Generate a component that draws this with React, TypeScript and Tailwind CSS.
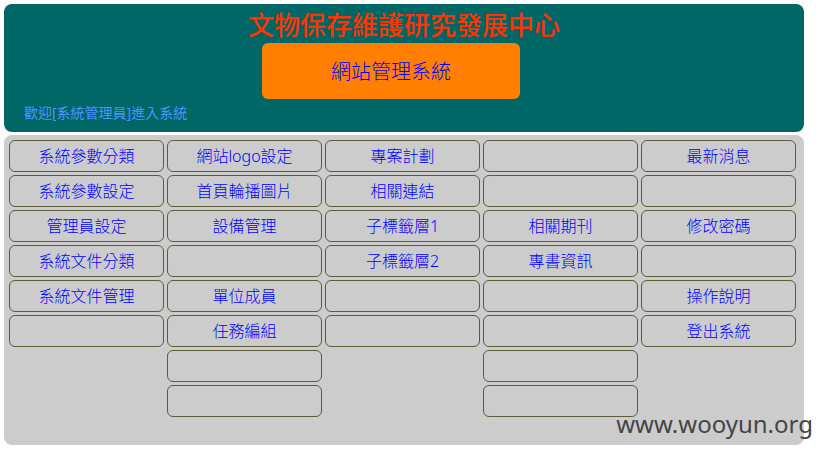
const columns: string[][] = [
  ['系統參數分類', '系統參數設定', '管理員設定', '系統文件分類', '系統文件管理', ''],
  ['網站logo設定', '首頁輪播圖片', '設備管理', '', '單位成員', '任務編組', '', ''],
  ['專案計劃', '相關連結', '子標籤層1', '子標籤層2', '', ''],
  ['', '', '相關期刊', '專書資訊', '', '', '', ''],
  ['最新消息', '', '修改密碼', '', '操作說明', '登出系統'],
];

function MenuCell({ label }: { label: string }) {
  return (
    <li className="flex h-8 items-center justify-center rounded-md border border-[#5c5c3d]">
      {label && (
        <a href="#" className="text-base leading-6 text-[#0000ff]">
          {label}
        </a>
      )}
    </li>
  );
}

function Header() {
  return (
    <header className="rounded-lg bg-[#006666] pt-1 pb-[9px]">
      <h1 className="text-center text-[26px] leading-[35px] font-medium text-[#ff3300]">
        文物保存維護研究發展中心
      </h1>
      <div className="grid grid-cols-[258fr_258fr_284fr]">
        <a
          href="#"
          className="col-start-2 flex h-14 items-center justify-center rounded-md bg-[#ff8000] pt-0.5 text-xl text-[#0000ff]"
        >
          網站管理系統
        </a>
      </div>
      <p className="mt-1 pl-5 text-sm leading-5 font-normal text-[#4d94ff]">歡迎[系統管理員]進入系統</p>
    </header>
  );
}

export default function App() {
  return (
    <div className="relative bg-white pt-1 pr-[17px] pb-[9px] pl-1 font-['Noto_Sans','Noto_Sans_CJK_TC',sans-serif] font-light">
      <Header />
      <nav className="mt-[3px] grid grid-cols-5 items-start gap-[3px] rounded-lg bg-[#cccccc] pt-[5px] pr-2 pb-7 pl-[5px]">
        {columns.map((labels, column) => (
          <ul key={column} className="flex flex-col gap-[3px]">
            {labels.map((label, row) => (
              <MenuCell key={row} label={label} />
            ))}
          </ul>
        ))}
      </nav>
      <span className="absolute right-2 bottom-3.5 text-2xl leading-8 font-normal text-[#444444]">
        www.wooyun.org
      </span>
    </div>
  );
}
